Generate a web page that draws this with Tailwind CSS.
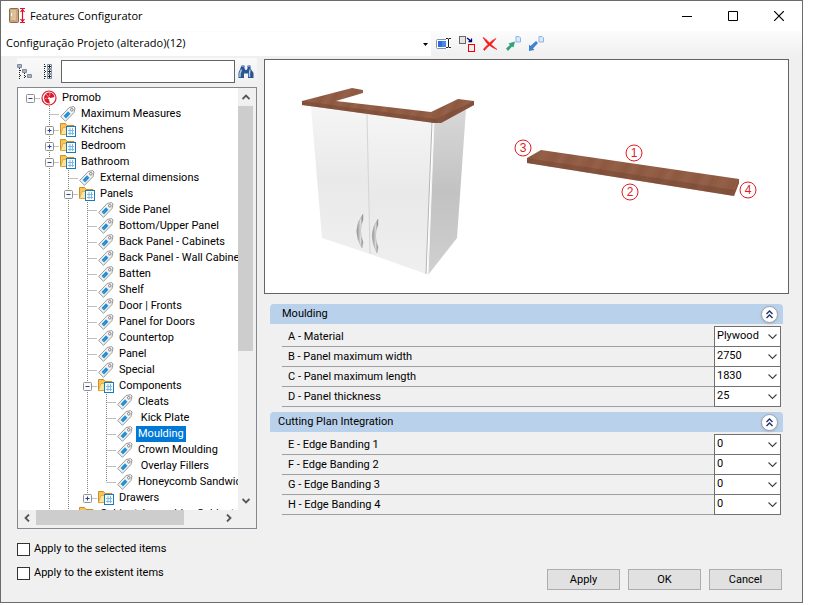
<!DOCTYPE html>
<html lang="en">
<head>
  <meta charset="UTF-8">
  <meta name="viewport" content="width=device-width, initial-scale=1.0">
  <title>Features Configurator</title>
  <script src="https://cdn.jsdelivr.net/npm/@tailwindcss/browser@4"></script>
</head>
<body class="bg-white min-h-screen flex pr-[10px] pb-[2px] font-[Roboto,'Liberation_Sans',sans-serif] text-[11px] text-black">
  <main class="flex-1 min-w-0 flex flex-col bg-[#f0f0f0] border border-[#6b6b6b]">
    <header class="h-[30px] shrink-0 flex items-center bg-white pl-2">
      <svg class="w-4 h-4" viewBox="0 0 16 16">
        <rect x="0.5" y="0.5" width="9" height="14" rx="1" fill="#c9a67c" stroke="#8a6a48"/>
        <path d="M2 2h5v10H2z" fill="#dcc09a"/>
        <path d="M2.500 5v3" stroke="#fff"/>
        <path d="M11 .5h5M11 14.500h5M13.500 1v13M11.500 4l2-2.500 2 2.500M11.500 11l2 2.500 2-2.500" fill="none" stroke="#e0102a" stroke-width="1.200"/>
      </svg>
      <h1 class="flex-1 pl-[5px] font-['Open_Sans',sans-serif] text-[11px]">Features Configurator</h1>
      <button aria-label="Minimize" class="w-[46px] h-full flex items-center justify-center"><svg class="w-[10px] h-[10px]" viewBox="0 0 10 10"><path d="M0 5.500h10" stroke="#000"/></svg></button>
      <button aria-label="Maximize" class="w-[46px] h-full flex items-center justify-center"><svg class="w-[10px] h-[10px]" viewBox="0 0 10 10"><path d="M.5.5h9v9h-9z" fill="none" stroke="#000"/></svg></button>
      <button aria-label="Close" class="w-[46px] h-full flex items-center justify-center"><svg class="w-[10px] h-[10px]" viewBox="0 0 10 10"><path d="M0 0l10 10M10 0L0 10" stroke="#000" stroke-width="1.200"/></svg></button>
    </header>

    <div class="h-[25px] shrink-0 flex items-center bg-linear-to-b from-[#fcfcfc] to-[#f0f0f0]">
      <div class="relative w-[430px] h-6 bg-white">
        <select aria-label="Configuration" class="appearance-none w-full h-full pl-[5px] font-['Open_Sans',sans-serif] text-[11px]">
          <option>Configuração Projeto (alterado)(12)</option>
        </select>
        <svg class="absolute right-[3px] top-[11px] w-[5px] h-[3px] pointer-events-none" viewBox="0 0 5 3"><path d="M0 0h5L2.500 3z"/></svg>
      </div>
      <div class="flex items-center gap-[7px] pl-[5px]">
        <button aria-label="Rename"><svg class="w-4 h-4" viewBox="0 0 16 16"><rect x=".5" y="3.500" width="12" height="9" rx="1" fill="#fff" stroke="#8292ad"/><path d="M2 5h8v6H2z" fill="#4a86e8"/><path d="M2 5h4v6H2z" fill="#2f6bd6"/><path d="M10 2.500h2l.5.5.5-.5h2M12.500 3v8M10 11.500h2l.5-.5.5.5h2" fill="none" stroke="#fff" stroke-width="3"/><path d="M10 2.500h2l.5.5.5-.5h2M12.500 3v8M10 11.500h2l.5-.5.5.5h2" fill="none" stroke="#222"/></svg></button>
        <button aria-label="Replace"><svg class="w-4 h-4" viewBox="0 0 16 16"><rect x=".5" y=".5" width="6" height="7" fill="#e4e4e8" stroke="#6b6468"/><path d="M8 2l4 3M12.500 2.500v3h-3" fill="none" stroke="#00006e" stroke-width="1.300"/><rect x="9.500" y="8.500" width="6" height="7" fill="#eee" stroke="#f00000"/></svg></button>
        <button aria-label="Delete"><svg class="w-4 h-4" viewBox="0 0 16 16"><path d="M1 1.500Q3 2 7.500 7Q10 4 14 2.500L9 8.500Q12 11 15 13.500Q11 12 7.500 9.500Q4 12 2.500 14.500Q1 14 2 12.500L6 8.500Q3 5 1 1.500z" fill="#f51c1c" stroke="#f51c1c" stroke-width=".6"/></svg></button>
        <button aria-label="Export"><svg class="w-4 h-4" viewBox="0 0 16 16"><path d="M11 .5h3l1.500 1.500v4H11z" fill="#dce9fa" stroke="#8cb4e6"/><path d="M1 12.500L5 9 3.500 7.500 10 5.500 8.500 11.500 7 10.500 3 15z" fill="#2fa37c"/></svg></button>
        <button aria-label="Import"><svg class="w-4 h-4" viewBox="0 0 16 16"><path d="M11 .5h3l1.500 1.500v4H11z" fill="#dce9fa" stroke="#8cb4e6"/><path d="M1 15V8.500l1.500 1.500L8 5l2 2-5 5.500L6.500 14z" fill="#4080d0"/></svg></button>
      </div>
    </div>

    <div class="flex-1 min-h-0 flex gap-[7px] pt-[2px] pr-[13px]">
      <aside class="w-[256px] shrink-0 flex flex-col pl-4">
        <div class="h-[27px] shrink-0 flex items-center bg-linear-to-b from-[#fafafa] to-[#f0f0f0]">
          <button aria-label="Collapse all" class="w-[22px]"><svg class="w-4 h-4" viewBox="0 0 16 16"><path d="M2.500 4v11M3 6.500h3M7.500 9v6M3 11.500h2M8 12.500h3" stroke="#222" stroke-dasharray="1 1"/><g fill="#fff" stroke="#7d8da3"><path d="M.5.500h4v3h-4zM5.500 5.500h4v3h-4zM10.500 10.500h4v3h-4z"/></g><path d="M1 2h3M6 7h3M11 12h3" stroke="#222" stroke-width=".7"/></svg></button>
          <button aria-label="Expand all" class="w-[22px]"><svg class="w-4 h-4" viewBox="0 0 16 16"><path d="M5.500 0v16M6 2.500h3M6 7.500h3M6 12.500h3" stroke="#222" stroke-dasharray="1 1"/><g fill="#fff" stroke="#7d8da3"><path d="M8.500.500h4v4h-4zM8.500 5.500h4v4h-4zM8.500 10.500h4v4h-4z"/></g><path d="M9 2.500h3M10.500 1v3M9 7.500h3M10.500 6v3M9 12.500h3M10.500 11v3" stroke="#222"/></svg></button>
          <input type="text" aria-label="Search" class="flex-1 min-w-0 h-[23px] bg-white border border-[#646464] px-1 outline-none">
          <button aria-label="Find" class="w-[22px] flex justify-center"><svg class="w-4 h-4" viewBox="0 0 16 16"><path d="M3.500 1.500h3v3l1 1.500h1l1-1.500v-3h3v3L15.500 9v5h-5.500V9.500H6V14H.500V9z" fill="#2b5590"/><path d="M3.500 5.500L2 9.500V13M12 5.500l-.5 4V13" fill="none" stroke="#b4cdec" stroke-width="1.400"/><path d="M3.500 2.500h3M9.500 2.500h3" stroke="#6f97cb"/></svg></button>
        </div>

        <div class="mt-[2px] flex-1 min-h-0 flex flex-col bg-[#f0f0f0] border border-[#828790]">
          <div class="flex-1 min-h-0 flex">
            <ul id="tree" class="flex-1 basis-0 h-0 min-h-full min-w-0 overflow-hidden bg-white pt-[2px]"></ul>
            <div class="w-[18px] shrink-0 flex flex-col items-start">
              <button aria-label="Scroll up" class="w-4 h-[18px] flex items-center justify-center"><svg class="w-2 h-[6px]" viewBox="0 0 8 6"><path d="M.5 5L4 1.500 7.500 5" fill="none" stroke="#555" stroke-width="1.800"/></svg></button>
              <div class="w-[15px] h-[245px] bg-[#cdcdcd]"></div>
              <button aria-label="Scroll down" class="w-4 h-[18px] mt-auto flex items-center justify-center"><svg class="w-2 h-[6px]" viewBox="0 0 8 6"><path d="M.5 1L4 4.500 7.500 1" fill="none" stroke="#555" stroke-width="1.800"/></svg></button>
            </div>
          </div>
          <div class="h-[18px] shrink-0 flex items-start pr-[18px]">
            <button aria-label="Scroll left" class="w-[18px] h-4 flex items-center justify-center"><svg class="w-[6px] h-2" viewBox="0 0 6 8"><path d="M5 .5L1.500 4 5 7.500" fill="none" stroke="#555" stroke-width="1.800"/></svg></button>
            <div class="w-[148px] h-[15px] bg-[#cdcdcd]"></div>
            <button aria-label="Scroll right" class="w-[18px] h-4 ml-auto flex items-center justify-center"><svg class="w-[6px] h-2" viewBox="0 0 6 8"><path d="M1 .5L4.500 4 1 7.500" fill="none" stroke="#555" stroke-width="1.800"/></svg></button>
          </div>
        </div>
      </aside>

      <section class="flex-1 min-w-0 flex flex-col pt-px">
        <div class="border border-[#646464] bg-white">
          <svg class="block w-full" viewBox="0 0 523 233" role="img" aria-label="Cabinet with moulding and edge numbers">
            <defs>
              <linearGradient id="door" x1="0" y1="0" x2="0" y2="1"><stop offset="0" stop-color="#f5f5f5"/><stop offset=".5" stop-color="#e9e9e9"/><stop offset="1" stop-color="#efefef"/></linearGradient>
              <linearGradient id="side" x1="0" y1="0" x2="0" y2="1"><stop offset="0" stop-color="#d8d8d8"/><stop offset=".5" stop-color="#c2c2c2"/><stop offset="1" stop-color="#d0d0d0"/></linearGradient>
              <linearGradient id="metal"><stop offset="0" stop-color="#888"/><stop offset=".6" stop-color="#ddd"/><stop offset="1" stop-color="#777"/></linearGradient>
              <linearGradient id="wood" x1="0" x2=".09" y1="0" y2=".01" spreadMethod="reflect"><stop offset="0" stop-color="#96614a"/><stop offset=".4" stop-color="#8c5840"/><stop offset="1" stop-color="#946048"/></linearGradient>
            </defs>
            <path d="M46 47L102 54 105 194 57 178z" fill="url(#door)"/>
            <path d="M102 54L167 63 161 214 105 194z" fill="url(#door)"/>
            <path d="M169 63L201 49 192 178 163 215z" fill="url(#side)"/>
            <path d="M167 62L161 214" stroke="#b5b5b5"/>
            <path d="M169 62L163 215" stroke="#f5f5f5"/>
            <path d="M102 54L105 194" stroke="#d4d4d4"/>
            <path d="M98 154Q86 170 97 188L98 182Q93 170 98 160z" fill="url(#metal)" stroke="#aaa" stroke-width=".5"/>
            <path d="M113 159Q102 174 112 193L113 187Q108 175 113 165z" fill="url(#metal)" stroke="#aaa" stroke-width=".5"/>
            <path d="M37 41L87 28 98 30V33L71 41 166 52 193 39 209 41V45L176 63 169 63 37 45z" fill="url(#wood)"/>
            <path d="M37 41L171 59 209 41V45L176 63 169 63 37 45z" fill="#6f4130" fill-opacity=".4"/>
            <path d="M262 98L276 90 474 119V123L469 136 262 103z" fill="url(#wood)"/>
            <path d="M262 98L470 130 474 119V123L469 136 262 103z" fill="#6f4130" fill-opacity=".4"/>
            <g fill="none" stroke="#e01b24">
              <circle cx="258" cy="88" r="8"/><circle cx="369" cy="93" r="8"/><circle cx="365" cy="132" r="8"/><circle cx="483" cy="130" r="8"/>
            </g>
            <g fill="#e01b24" font-family="Liberation Sans, sans-serif" font-size="12" text-anchor="middle">
              <text x="258" y="92">3</text><text x="369" y="97">1</text><text x="365" y="136">2</text><text x="483" y="134">4</text>
            </g>
          </svg>
        </div>
        <div id="groups" class="flex flex-col gap-1 pt-[10px] pl-[6px] pr-[6px]"></div>
      </section>
    </div>

    <footer class="shrink-0 flex items-end justify-between pl-4 pr-5 pt-3 pb-3">
      <div class="flex flex-col gap-2 pb-[9px]">
        <label class="flex items-center gap-1 h-4"><input type="checkbox" class="appearance-none w-[13px] h-[13px] bg-white border border-[#333]">Apply to the selected items</label>
        <label class="flex items-center gap-1 h-4"><input type="checkbox" class="appearance-none w-[13px] h-[13px] bg-white border border-[#333]">Apply to the existent items</label>
      </div>
      <div class="flex gap-2">
        <button class="w-[73px] h-[21px] leading-[19px] bg-[#e1e1e1] border border-[#adadad]">Apply</button>
        <button class="w-[73px] h-[21px] leading-[19px] bg-[#e1e1e1] border border-[#adadad]">OK</button>
        <button class="w-[73px] h-[21px] leading-[19px] bg-[#e1e1e1] border border-[#adadad]">Cancel</button>
      </div>
    </footer>
  </main>

  <script>
    // level, icon, label, expander, last child of its parent
    const nodes = [
      [0, 'root', 'Promob', '-'],
      [1, 'tag', 'Maximum Measures'],
      [1, 'folder', 'Kitchens', '+'],
      [1, 'folder', 'Bedroom', '+'],
      [1, 'folder', 'Bathroom', '-'],
      [2, 'tag', 'External dimensions'],
      [2, 'folder', 'Panels', '-'],
      [3, 'tag', 'Side Panel'],
      [3, 'tag', 'Bottom/Upper Panel'],
      [3, 'tag', 'Back Panel - Cabinets'],
      [3, 'tag', 'Back Panel - Wall Cabinets'],
      [3, 'tag', 'Batten'],
      [3, 'tag', 'Shelf'],
      [3, 'tag', 'Door | Fronts'],
      [3, 'tag', 'Panel for Doors'],
      [3, 'tag', 'Countertop'],
      [3, 'tag', 'Panel'],
      [3, 'tag', 'Special'],
      [3, 'folder', 'Components', '-'],
      [4, 'tag', 'Cleats'],
      [4, 'tag', '\u00a0Kick Plate'],
      [4, 'tag', 'Moulding'],
      [4, 'tag', 'Crown Moulding'],
      [4, 'tag', '\u00a0Overlay Fillers'],
      [4, 'tag', 'Honeycomb Sandwich', '', true],
      [3, 'folder', 'Drawers', '+', true],
      [2, 'folder', 'Cabinet Assembly - Cabinets', '+'],
    ];
    const selected = 'Moulding';

    const icons = {
      root: '<circle cx="8" cy="8" r="7" fill="#fff" stroke="#d81e2c" stroke-width="1.200"/><path d="M8 2.500a5.500 5.500 0 1 0 1 11L8 9.500l-1.500-1L8 7l1.500 1L13.500 7A5.500 5.500 0 0 0 8 2.500z" fill="#d81e2c"/><path d="M5 4l2.500 3M3.500 9L6 8M9 3L8.500 6" stroke="#f7b5b9" stroke-width=".7"/>',
      tag: '<path d="M.7 10.500L9.200 1.500 13.700.6 15 2l-1 4.500L5.500 15.300z" fill="#f4f4f4" stroke="#8b8b8b" stroke-width=".9"/><path d="M3.500 10L8 5.200 10.500 7.700 6 12.500z" fill="#2f9bdc"/><path d="M4.700 10.200L8.300 6.400M6.200 11.200l3.200-3.600" stroke="#1273b5" stroke-width=".6"/><circle cx="11.800" cy="3.800" r="1.300" fill="#fff" stroke="#777" stroke-width=".9"/>',
      folder: '<path d="M.5 1.500h5l1.500 2h7v9H.500z" fill="#f5c55c" stroke="#d08c1e"/><path d="M3 5.500h11v7H.500z" fill="#fce3a0" stroke="#d9a03c" stroke-width=".7"/><rect x="6.500" y="4.500" width="9" height="10" fill="#fff" stroke="#1a79b8"/><path d="M8 8.500h6M8 11.500h6M10 6v7M12.500 6v7" stroke="#7db9e0"/>',
    };

    function guides(level, expander, last) {
      const x = k => 12.5 + 19 * k;
      let lines = '';
      for (let k = 1; k <= level; k++) {
        lines += `M${x(k)} 0v${k === level && last ? 8 : 16}`;
      }
      lines += `M${x(level)} 8.5h10`;
      let box = '';
      if (expander) {
        const left = x(level) - 4;
        box = `<rect x="${left}" y="4.5" width="8" height="8" rx="1" fill="#fafafa" stroke="#919191"/>
          <path d="M${left + 2} 8.5h4${expander === '+' ? `M${left + 4} 6.5v4` : ''}" stroke="#26438f" stroke-width="1"/>`;
      }
      const width = 23 + 19 * level;
      return `<svg class="shrink-0" width="${width}" height="16" viewBox="0 0 ${width} 16"><path d="${lines}" stroke="#808080" stroke-dasharray="1 1"/>${box}</svg>`;
    }

    document.getElementById('tree').innerHTML = nodes.map(([level, icon, label, expander, last]) => `
      <li class="flex h-4 items-center whitespace-nowrap">
        ${guides(level, expander, last)}
        <svg class="shrink-0 w-4 h-4 mr-[3px]" viewBox="0 0 16 16">${icons[icon]}</svg>
        <span class="px-[2px] leading-4 ${label === selected ? 'bg-[#0078d7] text-white' : ''}">${label}</span>
      </li>`).join('');

    const groups = [
      { title: 'Moulding', pad: 'pl-3', rows: [
        ['A - Material', 'Plywood'],
        ['B - Panel maximum width', '2750'],
        ['C - Panel maximum length', '1830'],
        ['D - Panel thickness', '25'],
      ] },
      { title: 'Cutting Plan Integration', pad: 'pl-2', rows: [
        ['E - Edge Banding 1', '0'],
        ['F - Edge Banding 2', '0'],
        ['G - Edge Banding 3', '0'],
        ['H - Edge Banding 4', '0'],
      ] },
    ];

    document.getElementById('groups').innerHTML = groups.map((g, gi) => `
      <section>
        <div class="h-5 flex items-center justify-between ${g.pad} pr-[5px] bg-[#b9d1ea] rounded-t-[4px]">
          <h2>${g.title}</h2>
          <button aria-label="Collapse ${g.title}" class="w-[17px] h-[17px] rounded-full bg-white border border-[#a0a0a8] shadow-sm flex items-center justify-center">
            <svg class="w-[9px] h-[9px]" viewBox="0 0 9 9"><path d="M1.500 4L4.500 1l3 3M1.500 8l3-3 3 3" fill="none" stroke="#1f3468" stroke-width="1.400"/></svg>
          </button>
        </div>
        <div class="pt-[3px] pl-3 pr-[2px] pb-px">
          ${g.rows.map(([label, value], i) => `
          <div class="flex h-5">
            <label for="f${gi}${i}" class="flex-1 flex items-center pl-[6px] pt-[2px] border-b border-[#a0a0a0]">${label}</label>
            <div class="relative w-[67px] -mt-px">
              <select id="f${gi}${i}" class="appearance-none block w-full h-[21px] pl-[2px] bg-white border border-[#707070]"><option>${value}</option></select>
              <svg class="absolute right-1 top-2 w-[9px] h-[6px] pointer-events-none" viewBox="0 0 9 6"><path d="M.5.5l4 4 4-4" fill="none" stroke="#444" stroke-width="1.100"/></svg>
            </div>
          </div>`).join('')}
        </div>
      </section>`).join('');
  </script>
</body>
</html>
